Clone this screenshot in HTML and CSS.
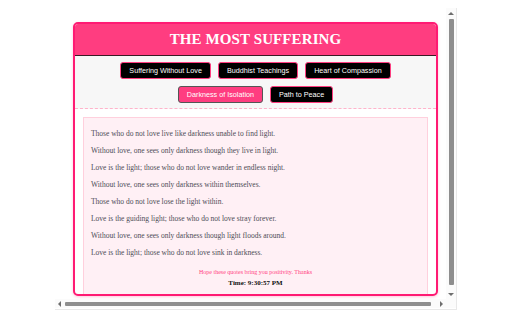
FILE: index.html
```html
<!DOCTYPE html>
<html>
<head>
<meta charset="utf-8">
<link rel="stylesheet" href="styles.css">
</head>
<body>
<div class="window">
  <div class="viewport">
    <div class="card">
      <div class="header"><h1 class="title">THE MOST SUFFERING</h1></div>
      <nav class="nav">
        <button class="btn">Suffering Without Love</button>
        <button class="btn">Buddhist Teachings</button>
        <button class="btn">Heart of Compassion</button>
        <button class="btn active">Darkness of Isolation</button>
        <button class="btn">Path to Peace</button>
      </nav>
      <section class="content">
        <div class="quotes">
          <p class="quote">Those who do not love live like darkness unable to find light.</p>
          <p class="quote">Without love, one sees only darkness though they live in light.</p>
          <p class="quote">Love is the light; those who do not love wander in endless night.</p>
          <p class="quote">Without love, one sees only darkness within themselves.</p>
          <p class="quote">Those who do not love lose the light within.</p>
          <p class="quote">Love is the guiding light; those who do not love stray forever.</p>
          <p class="quote">Without love, one sees only darkness though light floods around.</p>
          <p class="quote">Love is the light; those who do not love sink in darkness.</p>
          <p class="thanks">Hope these quotes bring you positivity. Thanks</p>
          <p class="time">Time: 9:30:57 PM</p>
        </div>
      </section>
    </div>
  </div>
  <div class="vbar">
    <div class="arrow-box v"><span class="tri up"></span></div>
    <div class="vtrack"><div class="vthumb"></div></div>
    <div class="arrow-box v small"><span class="tri down"></span></div>
  </div>
  <div class="hbar">
    <div class="arrow-box h"><span class="tri left"></span></div>
    <div class="htrack"><div class="hthumb"></div></div>
    <div class="arrow-box h"><span class="tri right"></span></div>
  </div>
  <div class="corner"></div>
</div>
</body>
</html>
```
FILE: styles.css
```css
html, body {
  margin: 0;
  padding: 0;
  background: #ffffff;
}
.window {
  width: 402px;
  height: 302px;
  margin: 8px 0 0 55px;
  display: grid;
  grid-template-columns: 391px 10px;
  grid-template-rows: 291px 9px;
  border-right: 1px solid #e8e8e8;
  border-bottom: 1px solid #e8e8e8;
  box-sizing: border-box;
}
.viewport {
  overflow: hidden;
  padding: 14px 0 0 18px;
  box-sizing: border-box;
}
.card {
  width: 365px;
  height: 274px;
  box-sizing: border-box;
  border: 2px solid #ff1a73;
  border-radius: 5px;
  overflow: hidden;
  background: #ffffff;
  box-shadow: 0 1px 3px rgba(255, 30, 110, 0.25);
}
.header {
  background: #ff3d80;
  height: 31px;
  border-bottom: 1px solid #3a1a24;
  display: flex;
  align-items: center;
  justify-content: center;
}
.title {
  margin: 0;
  font-family: "Liberation Serif", "Times New Roman", serif;
  font-weight: bold;
  font-size: 15px;
  line-height: 17px;
  color: #ffffff;
  letter-spacing: 0.1px;
}
.nav {
  background: #f7f7f7;
  padding: 6px 30px 5px;
  box-sizing: border-box;
  height: 53px;
  border-bottom: 1px dashed #ffb3cb;
  display: flex;
  flex-wrap: wrap;
  justify-content: center;
  align-content: flex-start;
  gap: 7px;
}
.btn {
  font-family: "Liberation Sans", Arial, sans-serif;
  font-size: 7.2px;
  line-height: 9px;
  height: 17px;
  padding: 3px 8px;
  box-sizing: border-box;
  background: #000000;
  color: #ffffff;
  border: 1px solid #ff3d80;
  border-radius: 3px;
  margin: 0;
}
.btn.active {
  background: #ff3d80;
  border-color: #555555;
}
.content {
  padding: 8px 8px 0;
}
.quotes {
  background: #fff0f5;
  border: 1px solid #ffd0dd;
  padding: 11px 7px 20px;
}
.quote {
  margin: 0 0 8px;
  font-family: "Liberation Serif", "Times New Roman", serif;
  font-size: 7.5px;
  line-height: 9px;
  color: #4d4d55;
}
.thanks {
  margin: 12px 0 0;
  text-align: center;
  font-family: "Liberation Serif", "Times New Roman", serif;
  font-size: 6px;
  line-height: 7px;
  color: #ff3d80;
}
.time {
  margin: 3px 0 0;
  text-align: center;
  font-family: "Liberation Serif", "Times New Roman", serif;
  font-weight: bold;
  font-size: 7px;
  line-height: 9px;
  color: #111111;
}
.vbar {
  display: flex;
  flex-direction: column;
  background: #fbfbfb;
}
.arrow-box {
  display: flex;
  align-items: center;
  justify-content: center;
}
.arrow-box.v {
  height: 10px;
}
.arrow-box.v.small {
  height: 9px;
}
.arrow-box.h {
  width: 9px;
}
.vtrack {
  flex: 1;
  padding-top: 1px;
  display: flex;
  justify-content: center;
  padding-left: 1px;
}
.vthumb {
  width: 5px;
  height: 266px;
  background: #8e8e8e;
  border-radius: 1px;
}
.hbar {
  display: flex;
  background: #fbfbfb;
}
.htrack {
  flex: 1;
  display: flex;
  align-items: center;
  padding-left: 1px;
}
.hthumb {
  width: 366px;
  height: 4px;
  background: #8e8e8e;
  border-radius: 1px;
}
.corner {
  background: #fbfbfb;
}
.tri {
  width: 0;
  height: 0;
  display: block;
}
.tri.up {
  border-left: 3px solid transparent;
  border-right: 3px solid transparent;
  border-bottom: 3px solid #6e6e6e;
}
.tri.down {
  border-left: 3px solid transparent;
  border-right: 3px solid transparent;
  border-top: 3px solid #6e6e6e;
}
.tri.left {
  border-top: 3px solid transparent;
  border-bottom: 3px solid transparent;
  border-right: 3px solid #6e6e6e;
}
.tri.right {
  border-top: 3px solid transparent;
  border-bottom: 3px solid transparent;
  border-left: 3px solid #6e6e6e;
}
```
